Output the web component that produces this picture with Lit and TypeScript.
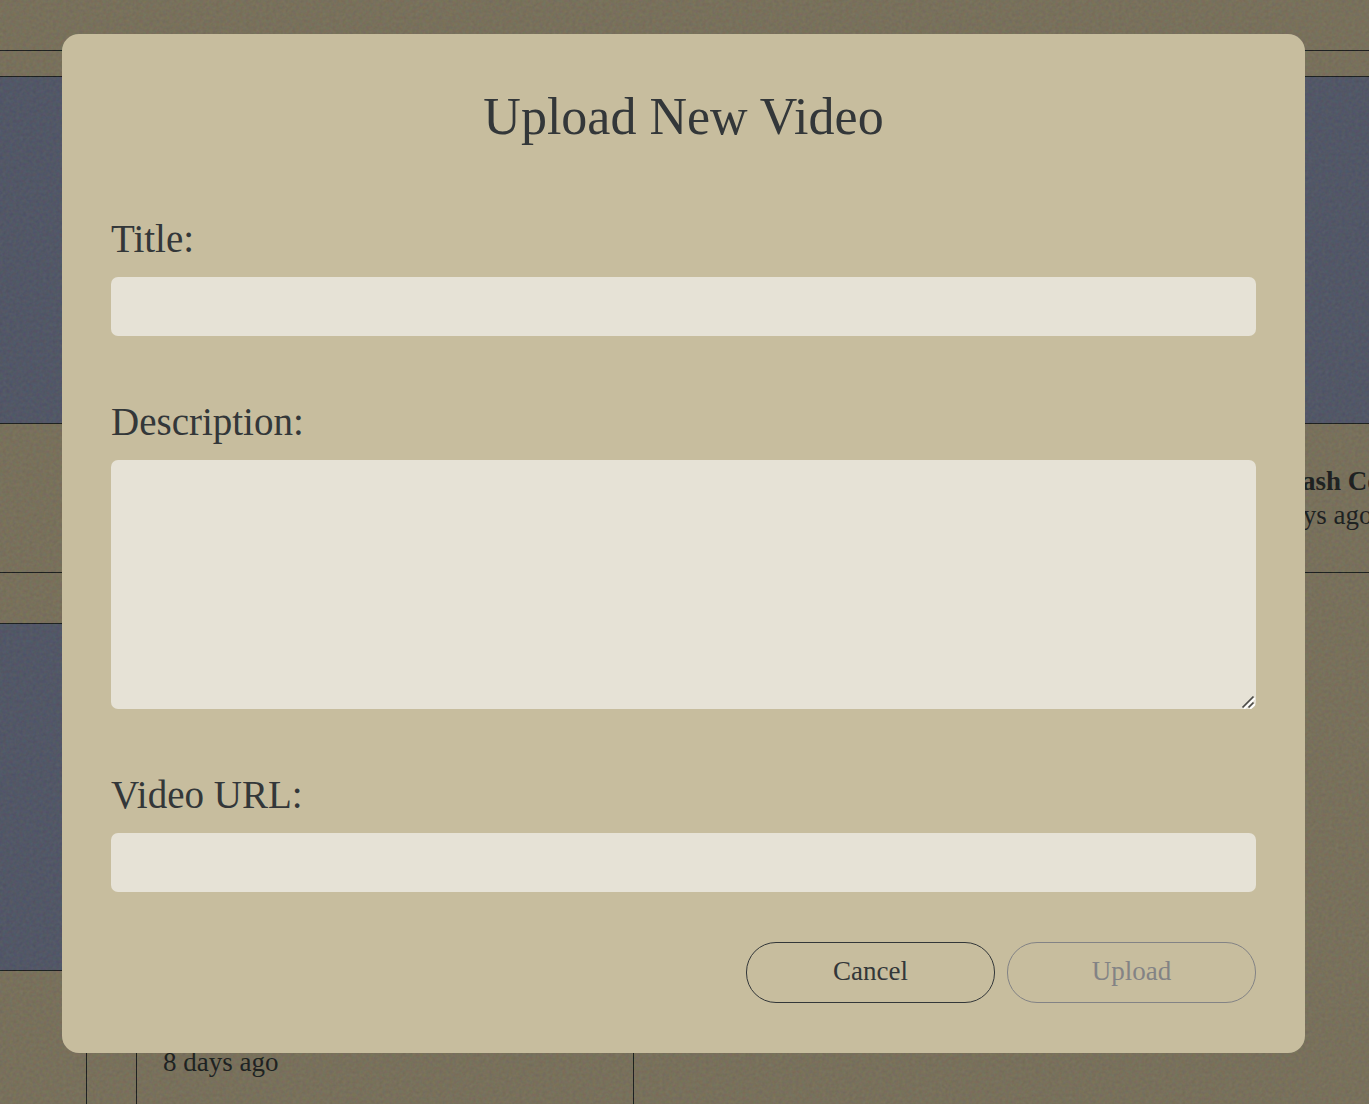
import { LitElement, html, css, svg } from "lit";
import { customElement, property, state } from "lit/decorators.js";

interface Video {
  title: string;
  age: string;
}

const rows: Video[][] = [
  [
    { title: "", age: "" },
    { title: "", age: "" },
    { title: "", age: "" },
    { title: "Squash Court", age: "6 days ago" },
  ],
  [
    { title: "", age: "" },
    { title: "", age: "8 days ago" },
  ],
];

@customElement("video-card")
class VideoCard extends LitElement {
  @property({ attribute: false }) video: Video = { title: "", age: "" };

  static styles = css`
    :host {
      display: flex;
      flex-direction: column;
      box-sizing: border-box;
      height: 497px;
      border: 1px solid #171b1c;
      color: #171b1c;
      font-size: 27px;
      line-height: 34px;
    }
    .thumb {
      height: 346px;
      background: #4f5567;
      border-bottom: 1px solid #171b1c;
    }
    .info {
      flex: 1;
      padding: 40px 26px;
    }
    .title {
      min-height: 34px;
      margin: 0;
      font: inherit;
      font-weight: 700;
    }
    .age {
      margin: 0;
    }
  `;

  render() {
    return html`
      <div class="thumb"></div>
      <div class="info">
        <h2 class="title">${this.video.title}</h2>
        <p class="age">${this.video.age}</p>
      </div>
    `;
  }
}

@customElement("upload-dialog")
class UploadDialog extends LitElement {
  @state() private titleText = "";
  @state() private url = "";

  static styles = css`
    :host {
      display: block;
    }
    .panel {
      box-sizing: border-box;
      padding: 49px 49px 50px;
      border-radius: 17px;
      background: #c7bd9e;
      color: #333739;
    }
    .heading {
      margin: 0 0 64px;
      font-size: 52px;
      line-height: 68px;
      font-weight: 400;
      text-align: center;
    }
    .form {
      display: flex;
      flex-direction: column;
      gap: 62px;
    }
    .field {
      display: flex;
      flex-direction: column;
      gap: 14px;
    }
    .label {
      font-size: 39px;
      line-height: 48px;
    }
    .control {
      display: block;
      box-sizing: border-box;
      width: 100%;
      height: 59px;
      margin: 0;
      padding: 12px;
      border: 0;
      border-radius: 7px;
      background: #e6e2d6;
      color: inherit;
      font: inherit;
      font-size: 27px;
    }
    .area {
      height: 249px;
      resize: vertical;
    }
    .area::-webkit-resizer {
      background: transparent;
    }
    .area-wrap {
      position: relative;
    }
    .grip {
      position: absolute;
      right: 1px;
      bottom: 0;
      width: 14px;
      height: 14px;
      pointer-events: none;
    }
    .actions {
      display: flex;
      justify-content: flex-end;
      gap: 12px;
      margin-top: -12px;
    }
    .button {
      box-sizing: border-box;
      width: 249px;
      height: 61px;
      padding: 0 0 2px;
      border: 1px solid #333739;
      border-radius: 30px;
      background: transparent;
      color: #333739;
      font: inherit;
      font-size: 27px;
      cursor: pointer;
    }
    .button:disabled {
      border-color: #838385;
      color: #838385;
      cursor: default;
    }
  `;

  render() {
    return html`
      <section class="panel" role="dialog" aria-labelledby="heading">
        <h1 class="heading" id="heading">Upload New Video</h1>
        <form class="form" @submit=${(e: Event) => e.preventDefault()}>
          <div class="field">
            <label class="label" for="title">Title:</label>
            <input class="control" id="title" type="text" .value=${this.titleText}
              @input=${(e: Event) => (this.titleText = (e.target as HTMLInputElement).value)} />
          </div>
          <div class="field">
            <label class="label" for="description">Description:</label>
            <div class="area-wrap">
              <textarea class="control area" id="description"></textarea>
              <svg class="grip" viewBox="0 0 14 14" aria-hidden="true">
                ${svg`
                  <path d="M3 14 14 3M9 14l5-5" stroke="#fff" stroke-width="1.6" fill="none" />
                  <path d="M1.5 12.5 12.5 1.5M7.5 12.5l5-5" stroke="#494947" stroke-width="1.7" fill="none" />
                `}
              </svg>
            </div>
          </div>
          <div class="field">
            <label class="label" for="url">Video URL:</label>
            <input class="control" id="url" type="url" .value=${this.url}
              @input=${(e: Event) => (this.url = (e.target as HTMLInputElement).value)} />
          </div>
          <div class="actions">
            <button class="button" type="button">Cancel</button>
            <button class="button" type="submit" ?disabled=${!this.titleText || !this.url}>Upload</button>
          </div>
        </form>
      </section>
    `;
  }
}

@customElement("app-root")
class AppRoot extends LitElement {
  static styles = css`
    :host {
      display: block;
      position: relative;
      min-height: 100vh;
      overflow: hidden;
      background: #78705b;
      font-family: "Liberation Serif", "Times New Roman", serif;
    }
    .page {
      height: 100vh;
      overflow: hidden;
    }
    .topbar {
      height: 50px;
      border-bottom: 1px solid #171b1c;
    }
    .rows {
      display: flex;
      flex-direction: column;
      gap: 50px;
      padding-top: 25px;
    }
    .row {
      display: grid;
      grid-template-columns: repeat(4, 498px);
      gap: 49px;
      margin-left: -411px;
    }
    .grain {
      position: absolute;
      inset: 0;
      width: 100%;
      height: 100%;
      opacity: 0.07;
      pointer-events: none;
    }
    .overlay {
      position: absolute;
      inset: 0;
      padding: 34px 64px 51px 62px;
    }
  `;

  render() {
    return html`
      <div class="page">
        <header class="topbar"></header>
        <main class="rows">
          ${rows.map(
            (row) => html`<div class="row">
              ${row.map((video) => html`<video-card .video=${video}></video-card>`)}
            </div>`
          )}
        </main>
      </div>
      <svg class="grain" aria-hidden="true">
        <filter id="noise" x="0" y="0" width="100%" height="100%" color-interpolation-filters="sRGB">
          <feTurbulence type="fractalNoise" baseFrequency="0.3" numOctaves="2" stitchTiles="stitch" />
          <feColorMatrix
            values="1 0 0 0 0  0 1 0 0 -0.03  0 0 1 0 -0.1  0 0 0 0 1" />
        </filter>
        <rect width="100%" height="100%" filter="url(#noise)" />
      </svg>
      <div class="overlay"><upload-dialog></upload-dialog></div>
    `;
  }
}
